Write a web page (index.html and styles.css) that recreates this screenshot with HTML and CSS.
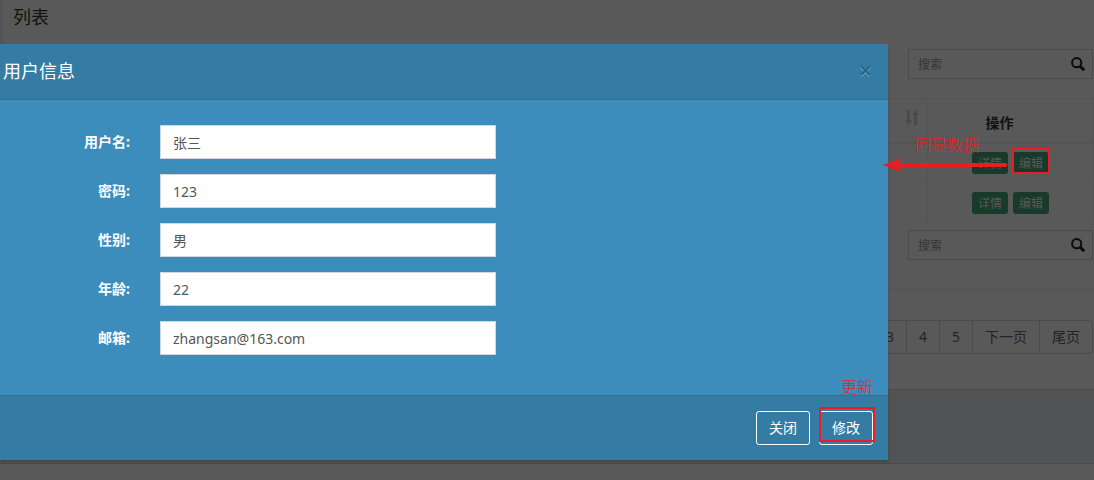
FILE: index.html
```html
<!DOCTYPE html>
<html lang="zh-CN">
<head>
<meta charset="utf-8">
<title>用户信息</title>
<link rel="stylesheet" href="styles.css">
</head>
<body>
<main class="page">
  <section class="box">
    <h1 class="box-title">列表</h1>
    <div class="box-body">
      <div class="toolbar">
        <label class="search">
          <input type="text" placeholder="搜索" aria-label="搜索">
          <svg class="search-icon" viewBox="0 0 14 14" aria-hidden="true"><circle cx="5.7" cy="5.7" r="4.6"/><path class="handle" d="M9.200 9.200l4 4"/></svg>
        </label>
      </div>
      <table class="list">
        <colgroup><col><col class="col-action"></colgroup>
        <thead>
          <tr>
            <th class="sort"><svg viewBox="0 0 14 15" aria-label="排序"><path d="M2 0h3v10h2L3.500 15 0 10h2zM9 15V5H7l3.500-5L14 5h-2v10z"/></svg></th>
            <th class="action-head">操作</th>
          </tr>
        </thead>
        <tbody>
          <tr><td></td><td><div class="actions"><button type="button">详情</button><button type="button">编辑</button></div></td></tr>
          <tr><td></td><td><div class="actions"><button type="button">详情</button><button type="button">编辑</button></div></td></tr>
        </tbody>
      </table>
      <div class="toolbar toolbar-bottom">
        <label class="search">
          <input type="text" placeholder="搜索" aria-label="搜索">
          <svg class="search-icon" viewBox="0 0 14 14" aria-hidden="true"><circle cx="5.7" cy="5.7" r="4.6"/><path class="handle" d="M9.200 9.200l4 4"/></svg>
        </label>
      </div>
    </div>
    <nav class="pagination">
      <a href="#">3</a><a href="#">4</a><a href="#">5</a><a href="#">下一页</a><a href="#">尾页</a>
    </nav>
  </section>
  <footer class="page-footer"></footer>
</main>

<form class="modal" role="dialog" aria-labelledby="modal-title">
  <header class="modal-header">
    <h2 id="modal-title">用户信息</h2>
    <button class="close" type="button" aria-label="关闭"><svg viewBox="0 0 11 11"><path class="glow" d="M1 2l9 9M10 2l-9 9"/><path d="M1 1l9 9M10 1l-9 9"/></svg></button>
  </header>
  <div class="modal-body">
    <label for="username">用户名:</label><input id="username" type="text" value="张三">
    <label for="password">密码:</label><input id="password" type="text" value="123">
    <label for="gender">性别:</label><input id="gender" type="text" value="男">
    <label for="age">年龄:</label><input id="age" type="text" value="22">
    <label for="email">邮箱:</label><input id="email" type="text" value="zhangsan@163.com">
  </div>
  <div class="modal-footer">
    <button type="button">关闭</button>
    <button type="submit">修改</button>
  </div>
</form>

<div class="mark mark-edit"></div>
<div class="mark mark-submit"></div>
<svg class="arrow" viewBox="0 0 128 16" aria-hidden="true"><path d="M2 8L21 1 17 6H124.500a2 2 0 0 1 0 4H17l4 5z"/></svg>
<span class="note note-data">回显数据</span>
<span class="note note-update">更新</span>
</body>
</html>
```
FILE: styles.css
```css
* { box-sizing: border-box; }
body {
  margin: 0;
  min-height: 100vh;
  position: relative;
  overflow: hidden;
  background: #595959;
  color: #121212;
  font: 14px/20px "Noto Sans", "Noto Sans CJK SC", sans-serif;
}
button, input { font: inherit; }
h1, h2 { margin: 0; font-weight: 400; font-size: 18px; }

.page { background: #535456; }
.box { margin-left: 2px; background: #595959; border-left: 1px solid #515254; }
.box-title { height: 39px; padding: 7px 10px; border-bottom: 1px solid #545454; }
.box-body { padding-top: 10px; border-bottom: 1px solid #535353; }
.toolbar { display: flex; justify-content: flex-end; padding-right: 1px; }
.toolbar-bottom { padding: 7px 1px 29px 0; }
.search {
  display: flex;
  align-items: center;
  width: 185px;
  height: 30px;
  padding: 0 7px 0 9px;
  border: 1px solid #4a4b4c;
}
.search input {
  flex: 1;
  min-width: 0;
  padding: 2px 0 0;
  border: 0;
  outline: 0;
  background: none;
  color: #353535;
  font-size: 12px;
}
.search input::placeholder { color: #353535; opacity: 1; }
.search-icon { width: 14px; height: 14px; fill: none; stroke: #0b0b0b; stroke-width: 2; }
.search-icon .handle { stroke-width: 3; }

.list { width: 100%; margin-top: 19px; border-collapse: collapse; table-layout: fixed; }
.col-action { width: 166px; }
.list th, .list td { padding: 0; border: 1px solid #545454; }
.list th { height: 44px; border-bottom-width: 2px; }
.list td { height: 40px; }
.list .sort { padding: 0 8px 8px 0; text-align: right; }
.sort svg { width: 14px; height: 15px; vertical-align: middle; fill: #4a4a4a; }
.list .action-head { padding: 5px 22px 0 0; font-weight: 700; }
.actions { display: flex; justify-content: center; gap: 5px; }
.actions button {
  height: 22px;
  padding: 1px 6px 0;
  border: 0;
  border-radius: 3px;
  background: #183a2a;
  color: #595959;
  font-size: 12px;
  line-height: 22px;
}

.pagination { display: flex; justify-content: flex-end; padding: 30px 1px 35px 0; }
.pagination a {
  height: 34px;
  padding: 6px 12px;
  border: 1px solid #4b4b4b;
  border-right: 0;
  color: #232323;
  text-decoration: none;
}
.pagination a:last-child { border-right: 1px solid #4b4b4b; border-radius: 0 4px 4px 0; }
.page-footer { height: 75px; background: #525355; border: 1px solid #4a4b4c; border-width: 1px 0; }

.modal {
  position: absolute;
  top: 44px;
  left: 0;
  right: 206px;
  background: #3c8dbc;
  color: #fff;
  box-shadow: 0 2px 3px rgba(0, 0, 0, .15);
}
.modal-header {
  display: flex;
  align-items: center;
  justify-content: space-between;
  height: 56px;
  padding: 0 17px 2px 3px;
  background: #357ca5;
  border-bottom: 1px solid #307095;
}
.close { display: flex; padding: 0; border: 0; background: none; }
.close svg { width: 11px; height: 11px; fill: none; stroke: #2a6384; stroke-width: 2; overflow: visible; }
.close .glow { stroke: #5d9abb; stroke-width: 3; }
.modal-body {
  display: grid;
  grid-template-columns: 130px 336px;
  gap: 15px 30px;
  padding: 25px 0 40px;
}
.modal-body label { padding-top: 7px; text-align: right; font-weight: 700; }
.modal-body input {
  height: 34px;
  padding: 6px 12px;
  border: 1px solid #d2d6de;
  border-radius: 0;
  background: #fff;
  color: #555;
}
.modal-footer {
  display: flex;
  justify-content: flex-end;
  gap: 9px;
  padding: 15px;
  background: #357ca5;
  border-top: 1px solid #307095;
}
.modal-footer button {
  height: 34px;
  padding: 0 12px;
  border: 1px solid #fff;
  border-radius: 3px;
  background: none;
  color: #fff;
}

.mark { position: absolute; border: 2px solid #ed1c24; }
.mark-edit { top: 148px; right: 44px; width: 38px; height: 26px; }
.mark-submit { top: 407px; right: 219px; width: 56px; height: 35px; }
.arrow { position: absolute; top: 157px; right: 85px; width: 128px; height: 16px; fill: #ed1c24; }
.note { position: absolute; color: #ed1c24; font-size: 16px; font-weight: 300; }
.note-data { top: 135px; right: 115px; }
.note-update { top: 377px; right: 221px; }
```
